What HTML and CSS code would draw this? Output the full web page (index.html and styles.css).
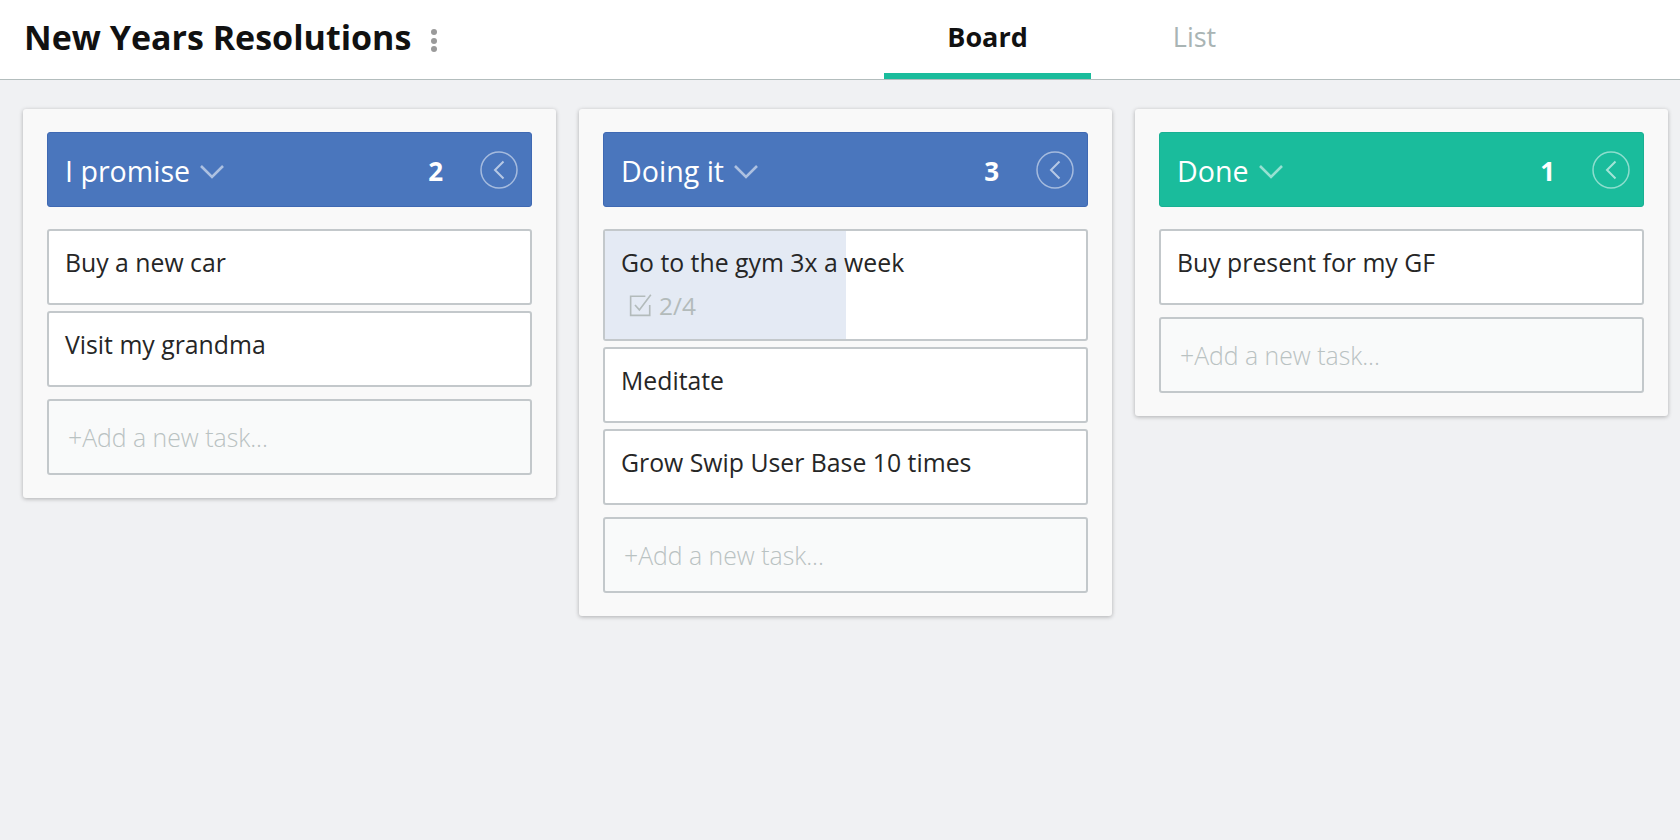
FILE: index.html
```html
<!DOCTYPE html>
<html lang="en">
<head>
<meta charset="utf-8">
<title>New Years Resolutions</title>
<link rel="stylesheet" href="styles.css">
</head>
<body>
<header class="topbar">
  <div class="title-wrap">
    <h1 class="title">New Years Resolutions</h1>
    <span class="kebab"><i></i><i></i><i></i></span>
  </div>
  <nav class="tabs">
    <a class="tab active">Board</a>
    <a class="tab">List</a>
  </nav>
</header>

<main class="board">
  <section class="column">
    <div class="col-head blue">
      <span class="col-name">I promise</span>
      <svg class="drop" width="26" height="16" viewBox="0 0 26 16"><path d="M2 2 L13 13 L24 2" fill="none" stroke="rgba(255,255,255,0.55)" stroke-width="2.6"/></svg>
      <span class="count">2</span>
      <svg class="collapse" width="38" height="38" viewBox="0 0 38 38"><circle cx="19" cy="19" r="18" fill="none" stroke="rgba(255,255,255,0.5)" stroke-width="1.5"/><path d="M23.5 10.5 L15 19 L23.5 27.5" fill="none" stroke="rgba(255,255,255,0.6)" stroke-width="2"/></svg>
    </div>
    <div class="card">Buy a new car</div>
    <div class="card">Visit my grandma</div>
    <div class="card add">+Add a new task...</div>
  </section>

  <section class="column">
    <div class="col-head blue">
      <span class="col-name">Doing it</span>
      <svg class="drop" width="26" height="16" viewBox="0 0 26 16"><path d="M2 2 L13 13 L24 2" fill="none" stroke="rgba(255,255,255,0.55)" stroke-width="2.6"/></svg>
      <span class="count">3</span>
      <svg class="collapse" width="38" height="38" viewBox="0 0 38 38"><circle cx="19" cy="19" r="18" fill="none" stroke="rgba(255,255,255,0.5)" stroke-width="1.5"/><path d="M23.5 10.5 L15 19 L23.5 27.5" fill="none" stroke="rgba(255,255,255,0.6)" stroke-width="2"/></svg>
    </div>
    <div class="card progress">
      <div class="fill" style="width:50%"></div>
      <div class="card-text">Go to the gym 3x a week</div>
      <div class="checklist">
        <svg width="24" height="24" viewBox="0 0 22 22"><path d="M15 3 H1.5 V20.5 H19 V11" fill="none" stroke="#b3bbbb" stroke-width="1.5"/><path d="M5.5 11 L9.5 15.5 L20 1.5" fill="none" stroke="#b3bbbb" stroke-width="1.5"/></svg>
        <span>2/4</span>
      </div>
    </div>
    <div class="card">Meditate</div>
    <div class="card">Grow Swip User Base 10 times</div>
    <div class="card add">+Add a new task...</div>
  </section>

  <section class="column">
    <div class="col-head green">
      <span class="col-name">Done</span>
      <svg class="drop" width="26" height="16" viewBox="0 0 26 16"><path d="M2 2 L13 13 L24 2" fill="none" stroke="rgba(255,255,255,0.55)" stroke-width="2.6"/></svg>
      <span class="count">1</span>
      <svg class="collapse" width="38" height="38" viewBox="0 0 38 38"><circle cx="19" cy="19" r="18" fill="none" stroke="rgba(255,255,255,0.5)" stroke-width="1.5"/><path d="M23.5 10.5 L15 19 L23.5 27.5" fill="none" stroke="rgba(255,255,255,0.6)" stroke-width="2"/></svg>
    </div>
    <div class="card">Buy present for my GF</div>
    <div class="card add">+Add a new task...</div>
  </section>
</main>
</body>
</html>
```

FILE: styles.css
```css
* { box-sizing: border-box; }

html, body {
  margin: 0;
  padding: 0;
  height: 100%;
}

body {
  font-family: "Open Sans", "Noto Sans", "Liberation Sans", sans-serif;
  background: #f0f1f3;
  color: #2a2a2a;
}

.topbar {
  display: grid;
  grid-template-columns: 884px 207px 207px 1fr;
  height: 80px;
  background: #ffffff;
  border-bottom: 1px solid #b3bdbd;
}

.title-wrap {
  display: flex;
  align-items: flex-start;
  padding-left: 24px;
}

.title {
  margin: 14px 0 0 0;
  font-size: 34px;
  line-height: 46px;
  font-weight: 700;
  color: #111111;
  letter-spacing: 0;
}

.kebab {
  display: flex;
  flex-direction: column;
  gap: 2.5px;
  margin: 29px 0 0 20px;
}

.kebab i {
  display: block;
  width: 6px;
  height: 6px;
  border-radius: 50%;
  background: #9a9a9a;
}

.tabs {
  display: contents;
}

.tab {
  display: block;
  height: 79px;
  padding-top: 19px;
  text-align: center;
  font-size: 27px;
  line-height: 36px;
  color: #a9b4b4;
  border-bottom: 6px solid transparent;
}

.tab.active {
  font-weight: 700;
  color: #111111;
  border-bottom-color: #1abc9c;
}

.board {
  display: flex;
  align-items: flex-start;
  gap: 23px;
  padding: 29px 0 0 23px;
}

.column {
  width: 533px;
  flex: none;
  background: #f9f9f9;
  border-radius: 3px;
  box-shadow: 0 1px 4px rgba(0, 0, 0, 0.28);
  padding: 23px 24px 23px 24px;
}

.col-head {
  display: flex;
  align-items: center;
  height: 75px;
  border-radius: 3px;
  padding: 2px 13px 0 17px;
  color: #ffffff;
  margin-bottom: 22px;
}

.col-head.blue {
  background: #4a76bd;
  border: 1px solid #3f69b3;
}

.col-head.green {
  background: #1abc9c;
  border: 1px solid #18b093;
}

.col-name {
  font-size: 28.6px;
  line-height: 38px;
}

.drop {
  margin-left: 9px;
  margin-top: 2px;
}

.count {
  margin-left: auto;
  font-size: 26px;
  font-weight: 700;
  line-height: 36px;
}

.collapse {
  margin-left: 37px;
  margin-bottom: 1px;
}

.card {
  position: relative;
  background: #ffffff;
  border: 2px solid #c3c8cb;
  border-radius: 3px;
  padding: 15px 16px 25px 16px;
  font-size: 24.8px;
  line-height: 32px;
  color: #262626;
  margin-bottom: 6px;
  overflow: hidden;
}

.card.add {
  margin-top: 12px;
  margin-bottom: 0;
  background: #f9fafa;
  padding: 20px 19px 20px 19px;
  color: #b9c2c2;
  font-weight: 300;
  height: 76px;
}

.card.progress {
  padding-bottom: 17px;
}

.fill {
  position: absolute;
  left: 0;
  top: 0;
  bottom: 0;
  background: #e4eaf4;
}

.card-text,
.checklist {
  position: relative;
}

.checklist {
  display: flex;
  align-items: center;
  gap: 6px;
  margin-top: 12px;
  padding-left: 8px;
  font-size: 24.5px;
  line-height: 32px;
  color: #b3bbbb;
}

.checklist svg {
  margin-top: -2px;
}
```
